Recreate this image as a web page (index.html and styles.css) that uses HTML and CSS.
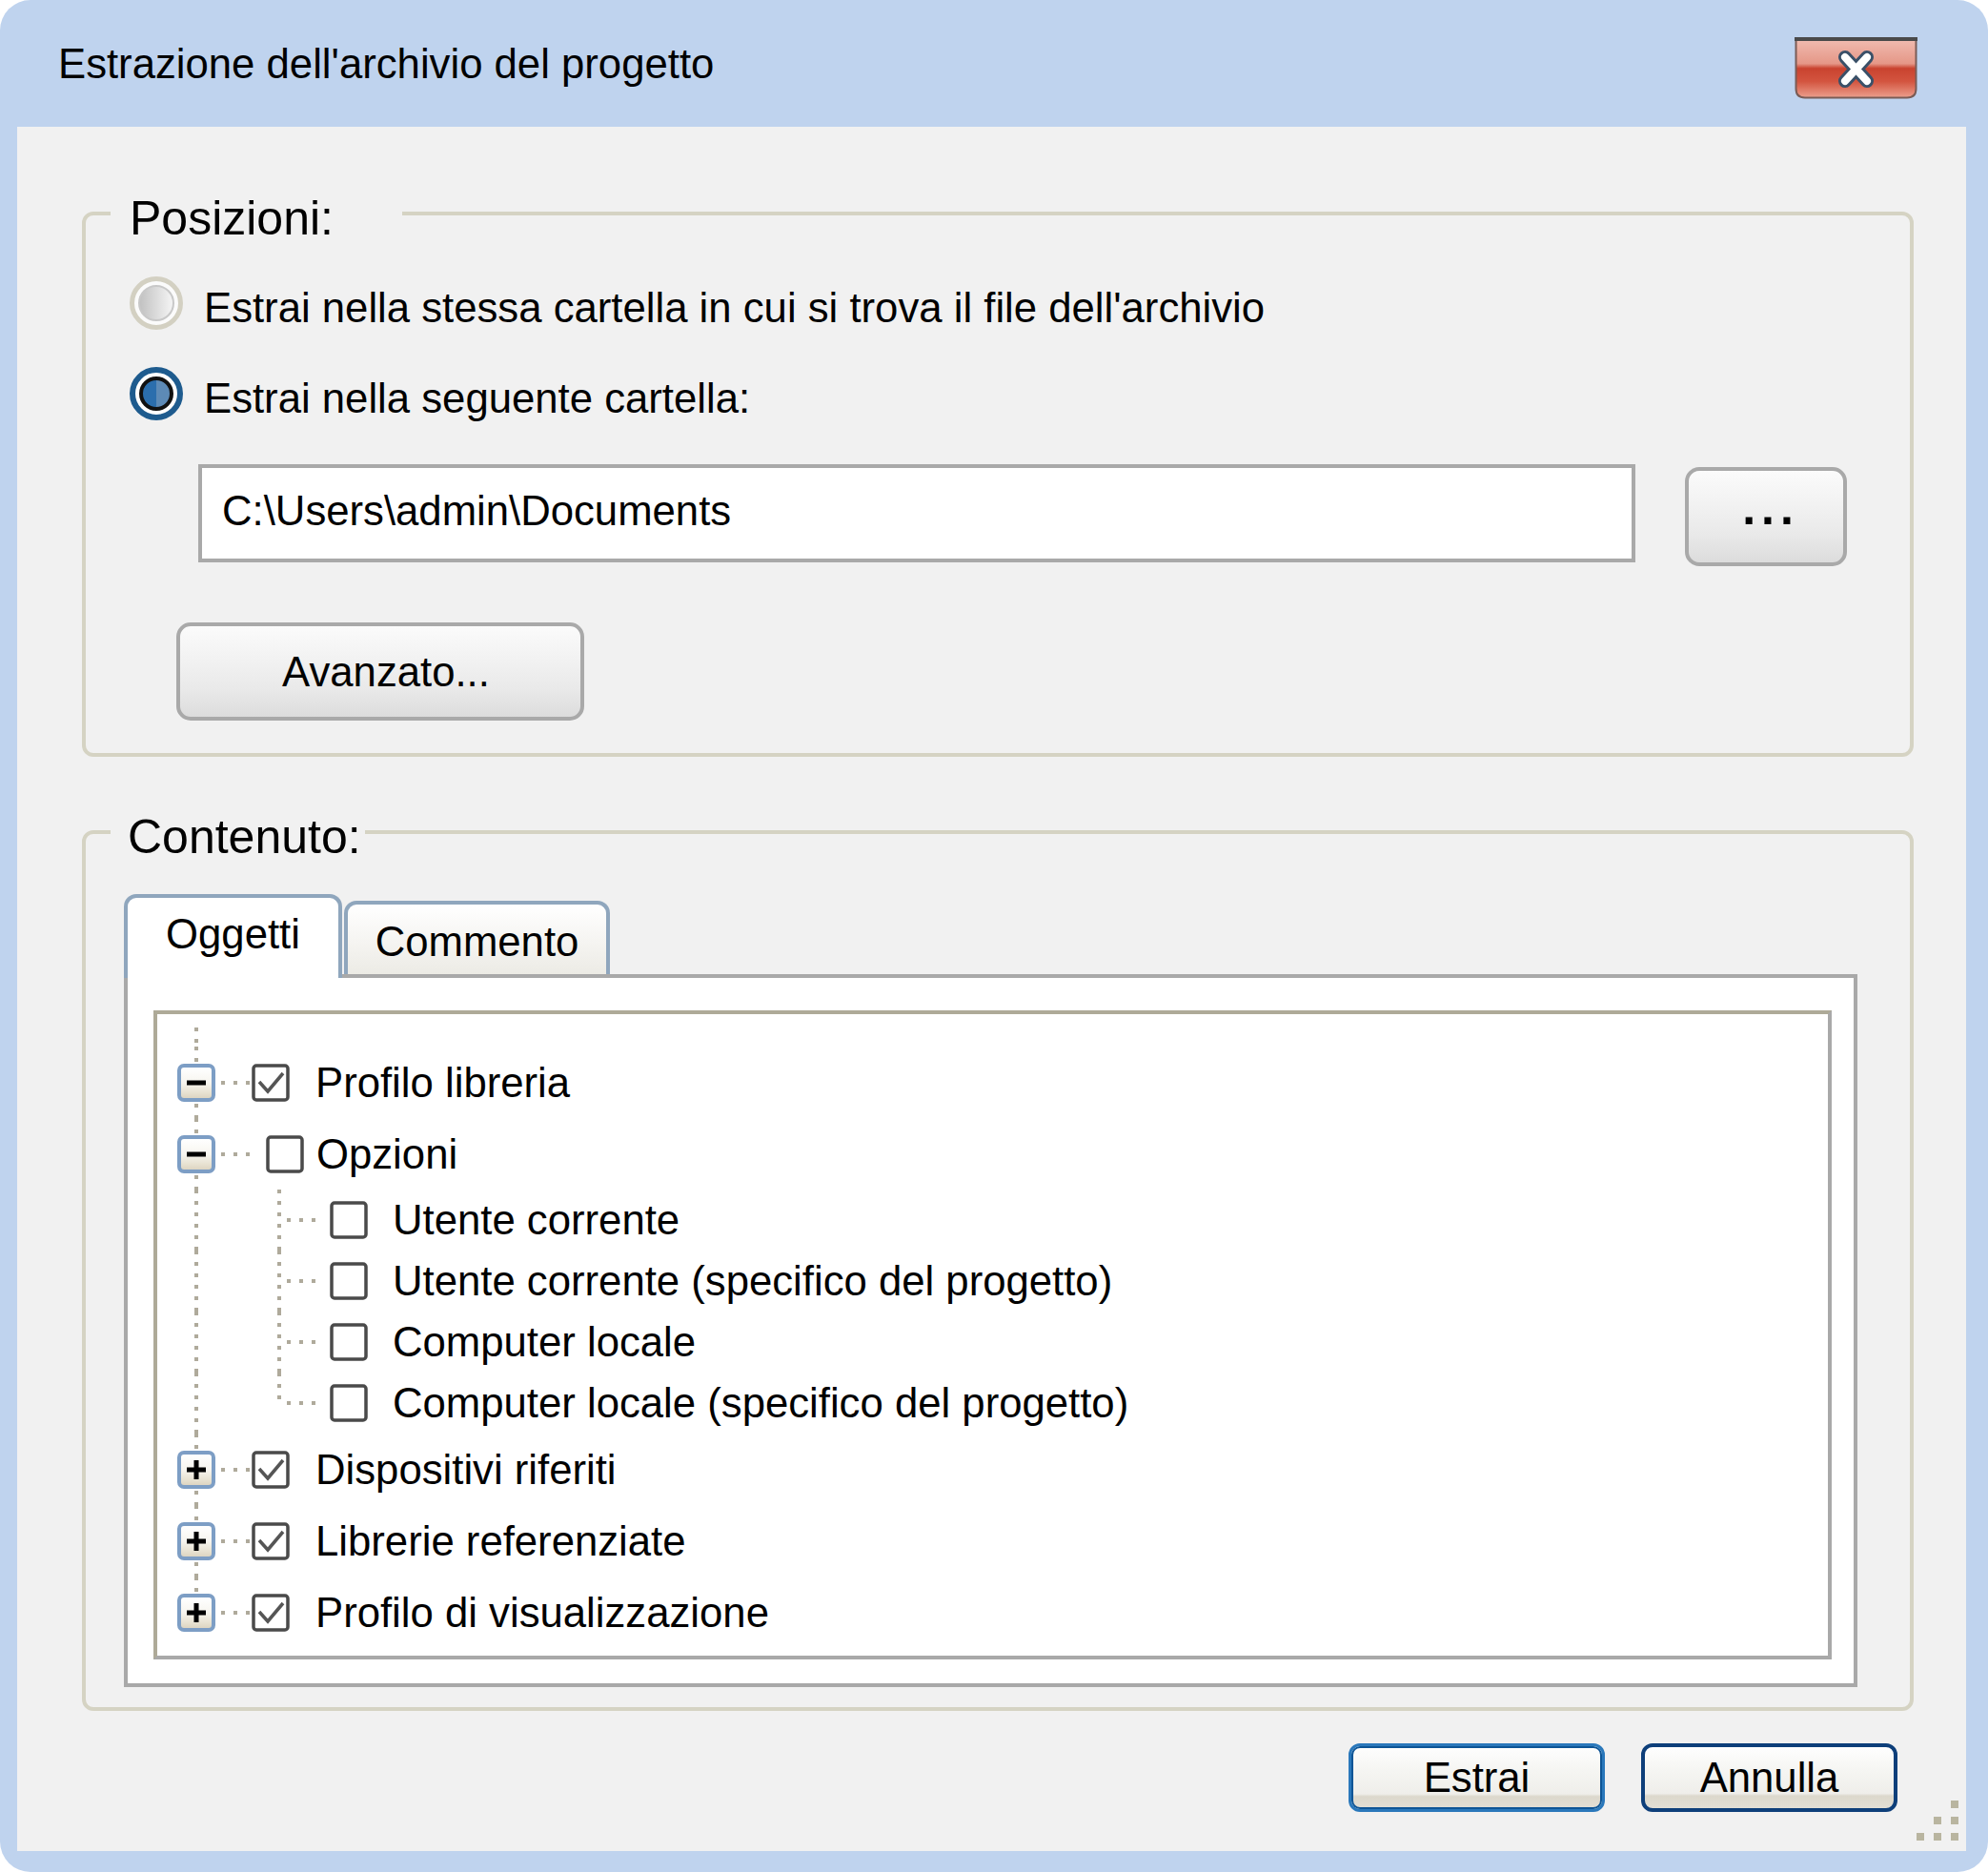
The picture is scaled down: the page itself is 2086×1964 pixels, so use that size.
FILE: index.html
```html
<!DOCTYPE html>
<html lang="it">
<head>
<meta charset="utf-8">
<title>Estrazione dell'archivio del progetto</title>
<link rel="stylesheet" href="styles.css">
</head>
<body>
<div class="window">
  <div class="titlebar">
    <div class="title">Estrazione dell'archivio del progetto</div>
    <button class="close-btn" aria-label="Chiudi">
      <svg width="129" height="65" viewBox="0 0 129 65">
        <defs>
          <linearGradient id="closeGrad" x1="0" y1="0" x2="0" y2="1">
            <stop offset="0" stop-color="#f1bcb1"/>
            <stop offset="0.42" stop-color="#e59787"/>
            <stop offset="0.5" stop-color="#c9432f"/>
            <stop offset="0.72" stop-color="#d3543f"/>
            <stop offset="1" stop-color="#ec9f8d"/>
          </linearGradient>
        </defs>
        <path d="M1.5 2 H127.5 V54 Q127.5 63.5 118 63.5 H11 Q1.5 63.5 1.5 54 Z" fill="url(#closeGrad)" stroke="#7a5c56" stroke-width="2"/>
        <rect x="0" y="0" width="129" height="4" fill="#4a4a4a"/>
        <path d="M53 21 L76 46 M76 21 L53 46" stroke="#3a5068" stroke-width="14" stroke-linecap="round" fill="none"/>
        <path d="M53 21 L76 46 M76 21 L53 46" stroke="#ffffff" stroke-width="8" stroke-linecap="round" fill="none"/>
      </svg>
    </button>
  </div>

  <div class="content">
    <fieldset class="group">
      <legend class="legend legend-pos">Posizioni:</legend>
      <div class="pos-body">
        <div class="radio-row">
          <span class="radio"><span class="radio-dot"></span></span>
          <span class="radio-label">Estrai nella stessa cartella in cui si trova il file dell'archivio</span>
        </div>
        <div class="radio-row radio-row-second">
          <span class="radio selected"><span class="radio-dot"></span></span>
          <span class="radio-label">Estrai nella seguente cartella:</span>
        </div>
        <div class="path-row">
          <div class="path-field">C:\Users\admin\Documents</div>
          <button class="btn browse-btn">...</button>
        </div>
        <button class="btn adv-btn">Avanzato...</button>
      </div>
    </fieldset>

    <fieldset class="group group-content">
      <legend class="legend legend-content">Contenuto:</legend>
      <div class="content-body">
        <div class="tabs">
          <div class="tab active">Oggetti</div>
          <div class="tab inactive">Commento</div>
        </div>
        <div class="tab-panel">
          <div class="tree">
            <div class="tree-stub"><span class="vcol"></span></div>

            <div class="row l1">
              <span class="vcol"><span class="exp"><svg width="22" height="22" viewBox="0 0 22 22"><path d="M1 11 H21" stroke="#000" stroke-width="5"/></svg></span></span>
              <span class="hconn"></span>
              <span class="cb"><svg width="40" height="40" viewBox="0 0 40 40"><rect x="2" y="2" width="36" height="36" rx="3" fill="#fff" stroke="#4a4a4a" stroke-width="3.5"/><path d="M8 19 L17 29 L33 10" fill="none" stroke="#555" stroke-width="3.5"/></svg></span>
              <span class="label">Profilo libreria</span>
            </div>

            <div class="row l1">
              <span class="vcol"><span class="exp"><svg width="22" height="22" viewBox="0 0 22 22"><path d="M1 11 H21" stroke="#000" stroke-width="5"/></svg></span></span>
              <span class="hconn hconn-wide"></span>
              <span class="cb"><svg width="40" height="40" viewBox="0 0 40 40"><rect x="2" y="2" width="36" height="36" rx="3" fill="#fff" stroke="#4a4a4a" stroke-width="3.5"/></svg></span>
              <span class="label label-tight">Opzioni</span>
            </div>

            <div class="row l2">
              <span class="vcol"></span>
              <span class="l2gut"></span>
              <span class="cb"><svg width="40" height="40" viewBox="0 0 40 40"><rect x="2" y="2" width="36" height="36" rx="3" fill="#fff" stroke="#4a4a4a" stroke-width="3.5"/></svg></span>
              <span class="label label-l2">Utente corrente</span>
            </div>

            <div class="row l2">
              <span class="vcol"></span>
              <span class="l2gut"></span>
              <span class="cb"><svg width="40" height="40" viewBox="0 0 40 40"><rect x="2" y="2" width="36" height="36" rx="3" fill="#fff" stroke="#4a4a4a" stroke-width="3.5"/></svg></span>
              <span class="label label-l2">Utente corrente (specifico del progetto)</span>
            </div>

            <div class="row l2">
              <span class="vcol"></span>
              <span class="l2gut"></span>
              <span class="cb"><svg width="40" height="40" viewBox="0 0 40 40"><rect x="2" y="2" width="36" height="36" rx="3" fill="#fff" stroke="#4a4a4a" stroke-width="3.5"/></svg></span>
              <span class="label label-l2">Computer locale</span>
            </div>

            <div class="row l2">
              <span class="vcol"></span>
              <span class="l2gut l2gut-end"></span>
              <span class="cb"><svg width="40" height="40" viewBox="0 0 40 40"><rect x="2" y="2" width="36" height="36" rx="3" fill="#fff" stroke="#4a4a4a" stroke-width="3.5"/></svg></span>
              <span class="label label-l2">Computer locale (specifico del progetto)</span>
            </div>

            <div class="row l1">
              <span class="vcol"><span class="exp"><svg width="22" height="22" viewBox="0 0 22 22"><path d="M1 11 H21 M11 1 V21" stroke="#000" stroke-width="5"/></svg></span></span>
              <span class="hconn"></span>
              <span class="cb"><svg width="40" height="40" viewBox="0 0 40 40"><rect x="2" y="2" width="36" height="36" rx="3" fill="#fff" stroke="#4a4a4a" stroke-width="3.5"/><path d="M8 19 L17 29 L33 10" fill="none" stroke="#555" stroke-width="3.5"/></svg></span>
              <span class="label">Dispositivi riferiti</span>
            </div>

            <div class="row l1">
              <span class="vcol"><span class="exp"><svg width="22" height="22" viewBox="0 0 22 22"><path d="M1 11 H21 M11 1 V21" stroke="#000" stroke-width="5"/></svg></span></span>
              <span class="hconn"></span>
              <span class="cb"><svg width="40" height="40" viewBox="0 0 40 40"><rect x="2" y="2" width="36" height="36" rx="3" fill="#fff" stroke="#4a4a4a" stroke-width="3.5"/><path d="M8 19 L17 29 L33 10" fill="none" stroke="#555" stroke-width="3.5"/></svg></span>
              <span class="label">Librerie referenziate</span>
            </div>

            <div class="row l1">
              <span class="vcol vcol-end"><span class="exp"><svg width="22" height="22" viewBox="0 0 22 22"><path d="M1 11 H21 M11 1 V21" stroke="#000" stroke-width="5"/></svg></span></span>
              <span class="hconn"></span>
              <span class="cb"><svg width="40" height="40" viewBox="0 0 40 40"><rect x="2" y="2" width="36" height="36" rx="3" fill="#fff" stroke="#4a4a4a" stroke-width="3.5"/><path d="M8 19 L17 29 L33 10" fill="none" stroke="#555" stroke-width="3.5"/></svg></span>
              <span class="label">Profilo di visualizzazione</span>
            </div>
          </div>
        </div>
      </div>
    </fieldset>

    <div class="actions">
      <button class="dlg-btn default-btn">Estrai</button>
      <button class="dlg-btn cancel-btn">Annulla</button>
    </div>

    <svg class="grip" width="44" height="44" viewBox="0 0 44 44">
      <g fill="#ffffff">
        <rect x="38" y="2" width="6" height="6"/>
        <rect x="20" y="19" width="6" height="6"/><rect x="38" y="19" width="6" height="6"/>
        <rect x="2" y="36" width="6" height="6"/><rect x="20" y="36" width="6" height="6"/><rect x="38" y="36" width="6" height="6"/>
      </g>
      <g fill="#b9b5a0">
        <rect x="36" y="0" width="8" height="8"/>
        <rect x="18" y="17" width="8" height="8"/><rect x="36" y="17" width="8" height="8"/>
        <rect x="0" y="34" width="8" height="8"/><rect x="18" y="34" width="8" height="8"/><rect x="36" y="34" width="8" height="8"/>
      </g>
    </svg>
  </div>
</div>
</body>
</html>
```

FILE: styles.css
```css
html, body {
  margin: 0;
  padding: 0;
  background: #ffffff;
}

body {
  font-family: "Liberation Sans", Arial, sans-serif;
  font-size: 43.7px;
  line-height: 50px;
  color: #000;
}

button {
  font: inherit;
  color: inherit;
  padding: 0;
  margin: 0;
  cursor: default;
}

.window {
  width: 2086px;
  height: 1964px;
  box-sizing: border-box;
  background: #bfd3ee;
  border-radius: 32px;
  display: flex;
  flex-direction: column;
  overflow: hidden;
}

/* Title bar */
.titlebar {
  height: 133px;
  flex: none;
  box-sizing: border-box;
  display: flex;
  justify-content: space-between;
  align-items: flex-start;
  padding: 39px 74px 0 61px;
}

.title {
  margin-top: 3px;
  line-height: 50px;
}

.close-btn {
  width: 129px;
  height: 65px;
  border: none;
  background: transparent;
  display: block;
}

.close-btn svg {
  display: block;
}

/* Content area */
.content {
  position: relative;
  flex: 1;
  margin: 0 23px 22px 18px;
  background: #f1f1f1;
  padding: 57px 55px 0 68px;
}

.group {
  margin: 0;
  padding: 0;
  min-width: 0;
  border: 4px solid #d5d3c3;
  border-radius: 12px;
}

.group-content {
  margin-top: 45px;
}

.legend {
  font-size: 50px;
  line-height: 58px;
  margin-left: 26px;
}

.legend-pos {
  padding: 10px 72px 0 20px;
}

.legend-content {
  padding: 10px 4px 0 18px;
}

/* Posizioni */
.pos-body {
  padding: 30px 66px 34px 46px;
}

.radio-row {
  display: flex;
  align-items: center;
}

.radio-row-second {
  margin-top: 35px;
}

.radio {
  flex: none;
  width: 56px;
  height: 56px;
  box-sizing: border-box;
  border-radius: 50%;
  border: 5px solid #d3d0c2;
  background: #fbfbfb;
  display: flex;
  align-items: center;
  justify-content: center;
}

.radio-dot {
  width: 38px;
  height: 38px;
  box-sizing: border-box;
  border-radius: 50%;
  border: 2px solid #c8c8c8;
  background: linear-gradient(to right, #c2c2c2, #f4f4f4);
}

.radio.selected {
  border: 6px solid #1e5b8e;
  background: #fff;
}

.radio.selected .radio-dot {
  width: 36px;
  height: 36px;
  border: 4px solid #111;
  background: linear-gradient(to right, #2b6ead 50%, #5d8ab6 50%);
}

.radio-label {
  margin-left: 22px;
  padding-top: 10px;
}

.path-row {
  display: flex;
  align-items: flex-start;
  margin-top: 44px;
  margin-left: 72px;
}

.path-field {
  flex: 1;
  height: 103px;
  box-sizing: border-box;
  border: 4px solid #a9a9a9;
  background: #fff;
  padding: 0 21px 6px;
  display: flex;
  align-items: center;
}

.btn {
  box-sizing: border-box;
  border: 4px solid #a9a9a9;
  border-radius: 15px;
  background: linear-gradient(to bottom, #fbfbfb 0%, #f1f1f1 40%, #e9e9e9 70%, #dcdcdc 100%);
  display: flex;
  align-items: center;
  justify-content: center;
}

.browse-btn {
  flex: none;
  width: 170px;
  height: 104px;
  margin-top: 3px;
  margin-left: 52px;
  font-size: 50px;
  font-weight: bold;
  letter-spacing: 6px;
  padding: 0 0 18px 10px;
}

.adv-btn {
  width: 428px;
  height: 103px;
  margin-top: 59px;
  margin-left: 49px;
  padding-left: 12px;
}

/* Contenuto */
.content-body {
  padding: 31px 55px 21px 40px;
}

.tabs {
  display: flex;
  align-items: flex-end;
  height: 84px;
}

.tab {
  box-sizing: border-box;
  border: 4px solid #8fa6bd;
  border-bottom: none;
  border-radius: 13px 13px 0 0;
  display: flex;
  align-items: center;
  justify-content: center;
}

.tab.active {
  position: relative;
  z-index: 1;
  width: 229px;
  height: 88px;
  margin-bottom: -4px;
  padding-bottom: 8px;
  background: #fff;
}

.tab.inactive {
  width: 279px;
  height: 77px;
  margin-left: 2px;
  padding-top: 4px;
  background: linear-gradient(to bottom, #ffffff 0%, #f5f4f1 55%, #ecebe5 100%);
}

.tab-panel {
  border: 4px solid #a9a9a9;
  background: #fff;
  padding: 34px 23px 25px 27px;
}

/* Tree */
.tree {
  height: 681px;
  box-sizing: border-box;
  border: 4px solid;
  border-color: #aeaa98 #a9a9a9 #a9a9a9 #aeaa98;
  background: #fff;
  padding: 14px 0 0 21px;
}

.tree-stub {
  display: flex;
  height: 20px;
}

.row {
  display: flex;
  align-items: center;
  height: 75px;
}

.row.l2 {
  height: 64px;
}

.vcol {
  flex: none;
  width: 40px;
  align-self: stretch;
  display: flex;
  align-items: center;
  justify-content: center;
  background: repeating-linear-gradient(to bottom, #afaa9b 0 4px, transparent 4px 12px) center top / 4px 100% no-repeat;
}

.vcol-end {
  background-size: 4px 50%;
}

.exp {
  width: 40px;
  height: 40px;
  box-sizing: border-box;
  border: 4px solid #7d9ec5;
  border-radius: 7px;
  background: linear-gradient(to bottom, #ffffff 0%, #f7f5ef 50%, #e6e0cf 85%, #ddd5c2 100%);
  display: flex;
  align-items: center;
  justify-content: center;
}

.exp svg {
  display: block;
}

.hconn {
  flex: none;
  width: 38px;
  align-self: stretch;
  background: repeating-linear-gradient(to right, #afaa9b 0 4px, transparent 4px 13px) 6px center / 30px 4px no-repeat;
}

.hconn-wide {
  width: 53px;
}

.l2gut {
  flex: none;
  width: 120px;
  align-self: stretch;
  background:
    repeating-linear-gradient(to right, #afaa9b 0 4px, transparent 4px 13px) 75px center / 32px 4px no-repeat,
    repeating-linear-gradient(to bottom, #afaa9b 0 4px, transparent 4px 12px) 65px top / 4px 100% no-repeat;
}

.l2gut-end {
  background:
    repeating-linear-gradient(to right, #afaa9b 0 4px, transparent 4px 13px) 75px center / 32px 4px no-repeat,
    repeating-linear-gradient(to bottom, #afaa9b 0 4px, transparent 4px 12px) 65px top / 4px 50% no-repeat;
}

.cb {
  flex: none;
  width: 40px;
  height: 40px;
}

.cb svg {
  display: block;
}

.label {
  margin-left: 27px;
  white-space: nowrap;
}

.label-tight {
  margin-left: 13px;
}

.label-l2 {
  margin-left: 26px;
}

/* Dialog buttons */
.actions {
  display: flex;
  justify-content: flex-end;
  gap: 38px;
  margin-top: 34px;
  padding-right: 17px;
}

.dlg-btn {
  width: 269px;
  height: 72px;
  box-sizing: border-box;
  border-radius: 12px;
  background: linear-gradient(to bottom, #fefefe 0%, #f5f5f2 40%, #efeeea 76%, #dcd8cc 80%, #e3dfd5 100%);
  display: flex;
  align-items: center;
  justify-content: center;
}

.default-btn {
  border: 3px solid #2a78bb;
  box-shadow: inset 0 0 0 2px #0e5596;
}

.cancel-btn {
  border: 4px solid #0e3f7a;
}

.grip {
  position: absolute;
  right: 8px;
  bottom: 9px;
}
```
